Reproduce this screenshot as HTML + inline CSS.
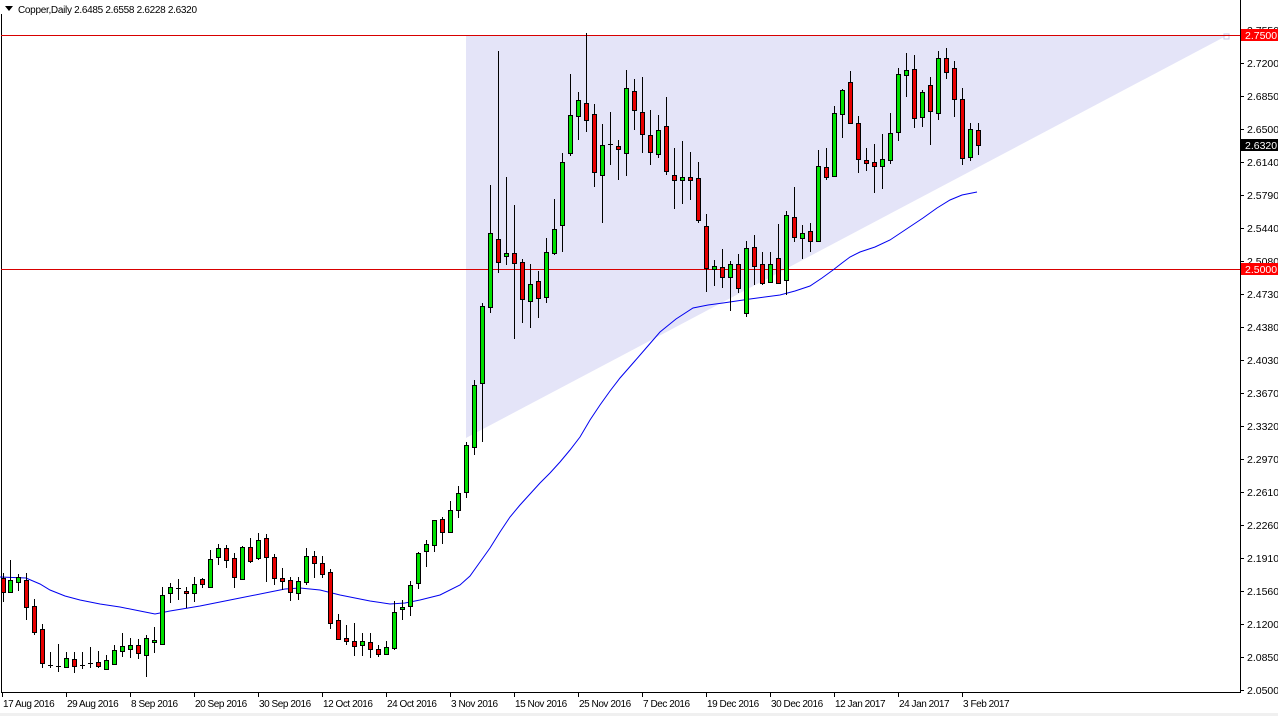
<!DOCTYPE html>
<html><head><meta charset="utf-8"><style>
html,body{margin:0;padding:0;background:#fff;}
body{width:1278px;height:716px;overflow:hidden;position:relative;font-family:"Liberation Sans",sans-serif;}
svg{position:absolute;left:0;top:0;}
text{font-family:"Liberation Sans",sans-serif;font-size:10.5px;fill:#000;}
text.d{font-size:10px;letter-spacing:-0.45px;}
text.t{font-size:10px;letter-spacing:-0.3px;}
</style></head><body>
<svg id="s" width="1278" height="716" xmlns="http://www.w3.org/2000/svg">
<rect x="0" y="713" width="1278" height="3" fill="#f0f0f0"/>
<polygon points="466,35 1228,35 466,438" fill="#e4e4f8"/>
<rect x="1224" y="34" width="5" height="5" fill="none" stroke="#c8c8e8" stroke-width="1"/>
<line x1="1.5" y1="14" x2="1.5" y2="693" stroke="#000"/>
<line x1="1" y1="692.5" x2="1240" y2="692.5" stroke="#000"/>
<line x1="1240.5" y1="0" x2="1240.5" y2="693" stroke="#000"/>
<line x1="1" y1="35.5" x2="1240" y2="35.5" stroke="#d80000"/>
<line x1="1" y1="269.5" x2="1240" y2="269.5" stroke="#d80000"/>
<polyline fill="none" stroke="#0000f0" stroke-width="1" points="0,577 26,578 40,584 50,590 65,596 80,600 100,604 120,607 140,611 155,614 170,611 200,606 240,598 270,592 285,589 300,588 320,590 340,595 355,598 370,601 390,604 405,603 420,600 440,595 460,585 470,576 480,562 490,548 500,532 510,517 520,505 530,494 540,483 550,473 560,462 570,450 580,437 590,420 600,405 610,391 620,378 634,362 647,347 660,332 676,319 693,308 708,305 723,303 750,299 780,295 795,291 810,286 822,278 833,270 842,263 850,257 860,252 875,247 890,240 905,230 923,218 937,208 950,200 962,195 977,192"/>
<g id="c"></g>
<g id="ax"></g>
<path d="M5,6 L13,6 L9,11 Z" fill="#000"/>
<text class="t" x="18" y="13">Copper,Daily  2.6485 2.6558 2.6228 2.6320</text>
</svg>
<script>
var D=[[3,578,592,573,602,'r'],[10,580,592,560,593,'g'],[18,577,582,574,591,'g'],[26,580,607,573,620,'r'],[34,606,632,599,635,'r'],[42,629,663,624,668,'r'],[50,665,665,652,668,'d'],[58,666,666,644,672,'d'],[66,658,667,652,668,'g'],[74,659,666,652,673,'r'],[82,665,665,652,669,'d'],[90,663,663,647,668,'d'],[98,662,666,651,668,'r'],[106,660,669,655,670,'g'],[114,650,664,645,665,'g'],[122,646,651,633,657,'g'],[130,645,649,638,658,'g'],[138,645,653,639,659,'r'],[146,638,655,635,677,'g'],[154,640,642,627,653,'g'],[162,595,644,587,644,'g'],[170,587,593,583,603,'g'],[178,588,588,579,600,'d'],[186,591,593,587,608,'r'],[194,584,593,577,602,'g'],[202,579,584,578,588,'r'],[210,559,587,550,587,'g'],[218,548,557,544,565,'g'],[226,548,560,545,568,'r'],[234,558,577,553,588,'r'],[242,547,579,546,580,'g'],[250,547,561,538,563,'r'],[258,540,558,533,560,'g'],[266,538,557,534,582,'r'],[274,557,578,554,585,'r'],[282,578,581,568,590,'r'],[290,580,592,577,601,'r'],[298,581,593,577,600,'g'],[306,556,582,548,585,'g'],[314,556,563,551,578,'r'],[322,563,574,556,578,'r'],[330,572,623,569,629,'r'],[338,620,639,614,640,'r'],[346,638,641,625,645,'r'],[354,641,646,623,656,'r'],[362,641,645,633,656,'g'],[370,642,649,633,658,'r'],[378,649,654,645,657,'r'],[386,647,654,641,655,'g'],[394,612,648,601,650,'g'],[402,607,609,600,620,'g'],[410,585,606,581,616,'g'],[418,553,583,552,589,'g'],[426,544,551,540,567,'g'],[434,520,545,520,552,'g'],[442,519,532,517,544,'r'],[450,510,532,501,533,'g'],[458,493,510,486,518,'g'],[466,445,492,442,498,'g'],[474,385,447,380,455,'g'],[482,306,383,303,442,'g'],[490,233,307,185,313,'g'],[498,239,262,51,273,'r'],[506,253,256,177,265,'g'],[514,253,263,205,339,'r'],[522,262,299,259,323,'r'],[530,284,301,264,328,'g'],[538,281,298,271,318,'r'],[546,252,297,238,303,'g'],[554,229,253,199,255,'g'],[562,162,225,153,252,'g'],[570,115,153,74,156,'g'],[578,100,116,92,140,'g'],[586,103,120,33,132,'r'],[594,114,172,104,187,'r'],[602,145,175,124,223,'g'],[610,144,144,112,165,'d'],[618,146,149,140,180,'r'],[626,88,153,70,176,'g'],[634,91,110,79,130,'r'],[642,112,134,77,153,'r'],[650,135,152,110,165,'r'],[658,130,154,115,158,'g'],[666,126,171,97,175,'r'],[674,175,180,148,209,'r'],[682,177,180,141,204,'g'],[690,177,180,152,200,'r'],[698,178,220,162,223,'r'],[706,226,268,214,292,'r'],[714,266,269,260,286,'g'],[722,267,277,249,288,'r'],[730,264,277,261,311,'g'],[738,264,288,254,293,'r'],[746,248,313,241,317,'g'],[754,247,266,235,285,'r'],[762,264,283,252,285,'r'],[770,264,282,252,283,'g'],[778,258,283,224,284,'r'],[786,215,280,211,295,'g'],[794,217,237,187,242,'r'],[802,233,238,225,259,'g'],[810,231,241,223,252,'r'],[818,166,241,150,242,'g'],[826,167,177,148,180,'r'],[834,113,176,106,177,'g'],[842,90,114,89,138,'g'],[850,82,123,71,124,'r'],[858,123,159,116,173,'r'],[866,160,163,148,171,'r'],[874,162,166,144,193,'r'],[882,159,166,134,189,'g'],[890,133,160,113,164,'g'],[898,74,132,68,141,'g'],[906,70,75,53,97,'g'],[914,69,118,55,128,'r'],[922,92,117,90,127,'g'],[930,85,111,77,145,'r'],[938,58,113,51,120,'g'],[946,58,72,48,79,'r'],[954,68,99,61,117,'r'],[962,99,158,88,165,'r'],[970,129,157,123,161,'g'],[978,130,145,123,155,'r']];
var h='';
D.forEach(function(c){var x=c[0];h+='<line x1="'+(x+.5)+'" y1="'+c[3]+'" x2="'+(x+.5)+'" y2="'+c[4]+'" stroke="#000"/>';
if(c[5]=='d'){h+='<line x1="'+(x-2)+'" y1="'+(c[1]+.5)+'" x2="'+(x+3)+'" y2="'+(c[1]+.5)+'" stroke="#000"/>';}
else{var ht=Math.max(c[2]-c[1],2);h+='<rect x="'+(x-1.5)+'" y="'+(c[1]+.5)+'" width="4" height="'+ht+'" fill="'+(c[5]=='g'?'#00e000':'#e80000')+'" stroke="#000"/>';}});
document.getElementById('c').innerHTML=h;
var a='',p=['2.7550','2.7200','2.6850','2.6500','2.6140','2.5790','2.5440','2.5080','2.4730','2.4380','2.4030','2.3670','2.3320','2.2970','2.2610','2.2260','2.1910','2.1560','2.1200','2.0850','2.0500'];
p.forEach(function(t,i){var y=30+i*33;a+='<line x1="1240" y1="'+(y+.5)+'" x2="1244" y2="'+(y+.5)+'" stroke="#000"/><text x="1247" y="'+(y+4)+'">'+t+'</text>';});
a+='<rect x="1241" y="29" width="37" height="12" fill="#f00"/><text x="1245" y="39" style="fill:#fff">2.7500</text>';
a+='<rect x="1241" y="139" width="37" height="12" fill="#000"/><text x="1245" y="149" style="fill:#fff">2.6320</text>';
a+='<rect x="1241" y="263" width="37" height="12" fill="#f00"/><text x="1245" y="273" style="fill:#fff">2.5000</text>';
var d=['17 Aug 2016','29 Aug 2016','8 Sep 2016','20 Sep 2016','30 Sep 2016','12 Oct 2016','24 Oct 2016','3 Nov 2016','15 Nov 2016','25 Nov 2016','7 Dec 2016','19 Dec 2016','30 Dec 2016','12 Jan 2017','24 Jan 2017','3 Feb 2017'];
d.forEach(function(t,i){var x=2+i*64;a+='<line x1="'+(x+.5)+'" y1="693" x2="'+(x+.5)+'" y2="697" stroke="#000"/><text class="d" x="'+(x+1)+'" y="707">'+t+'</text>';});
document.getElementById('ax').innerHTML=a;
</script>
</body></html>
